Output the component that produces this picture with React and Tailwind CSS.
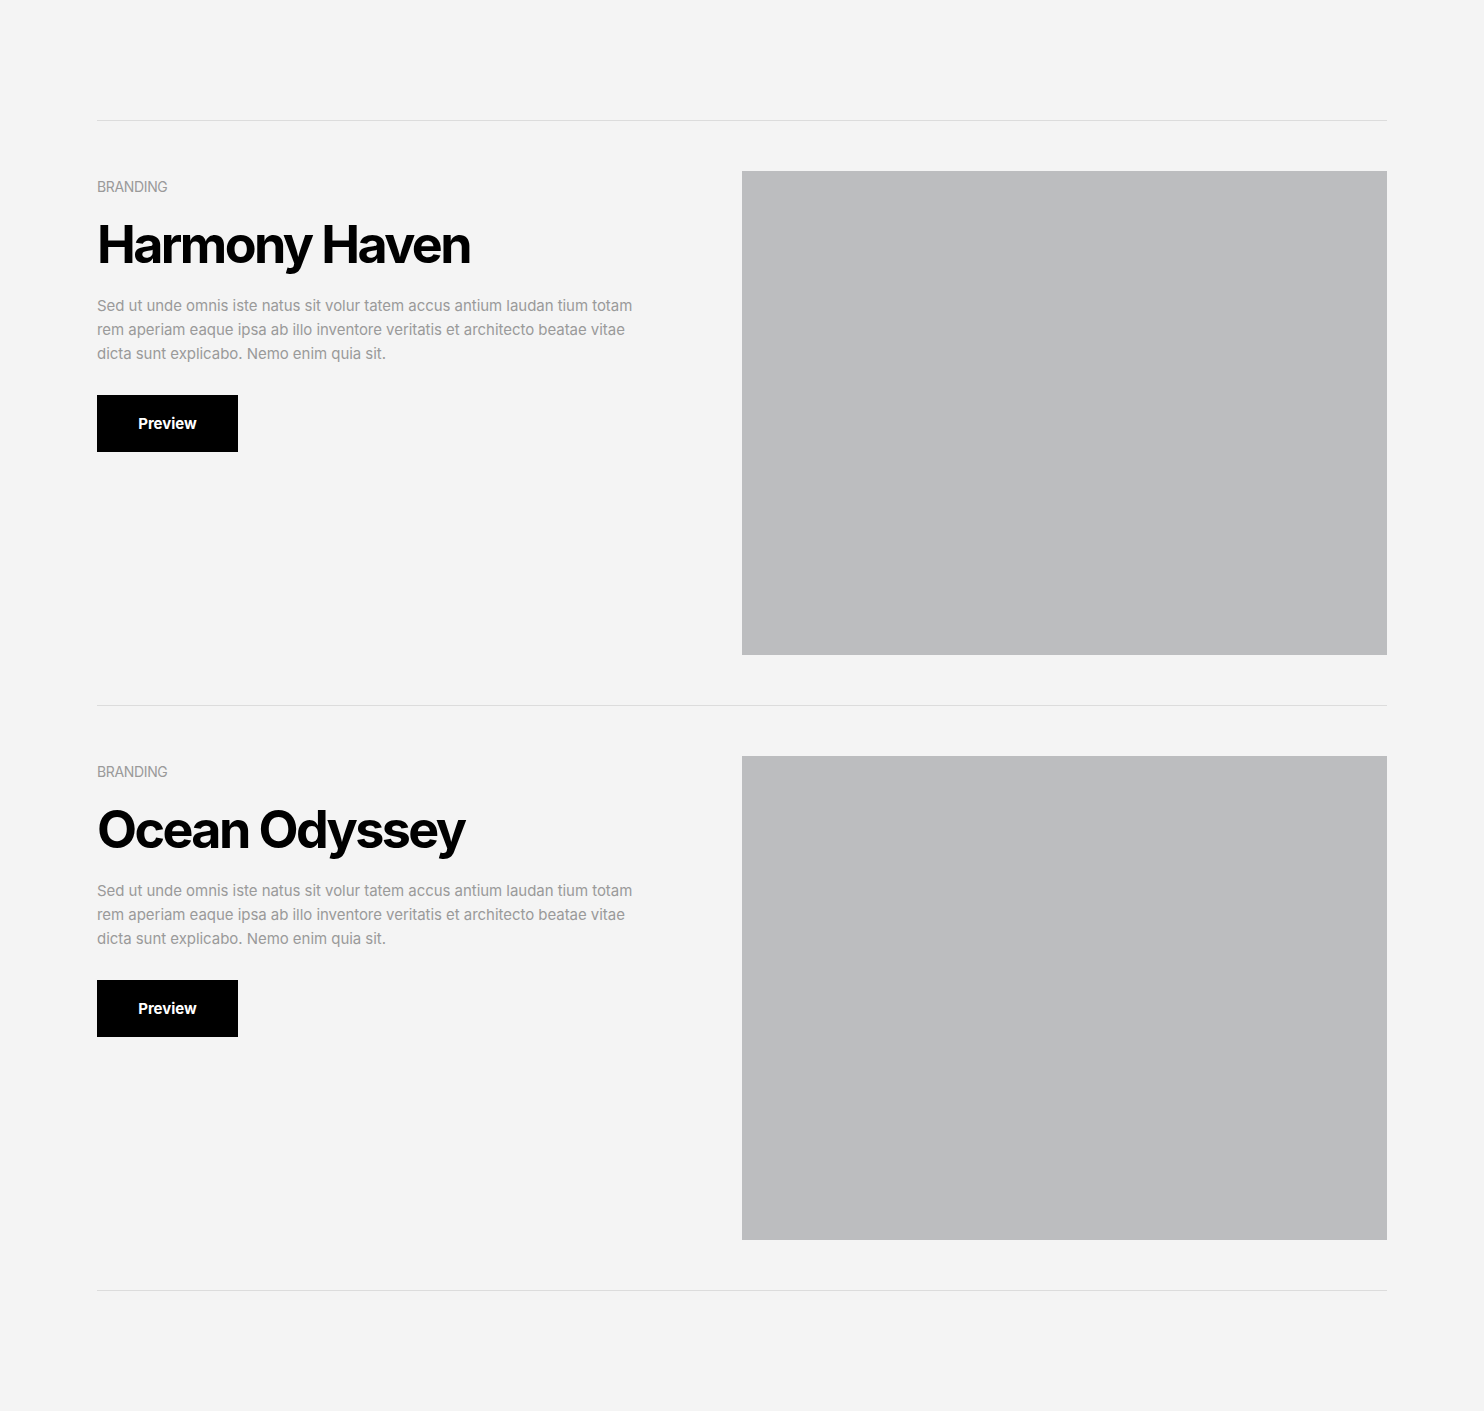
const projects = [
  { tag: "Branding", title: "Harmony Haven" },
  { tag: "Branding", title: "Ocean Odyssey" },
];

const body =
  "Sed ut unde omnis iste natus sit volur tatem accus antium laudan tium totam rem aperiam eaque ipsa ab illo inventore veritatis et architecto beatae vitae dicta sunt explicabo. Nemo enim quia sit.";

// ─── Project row ───────────────────────────────────────────────────────────
const ProjectRow = ({ tag, title }) => (
  <div className="grid grid-cols-2 border-t border-[#dcdcdc] py-[50px]">
    <div className="pt-[6px]">
      <p className="text-[14px] leading-[20px] uppercase tracking-[-0.025em] text-[#9a9a9a]">{tag}</p>
      <h2 className="mt-[18px] text-[52px] leading-[60px] font-bold tracking-[-0.05em] text-black">
        {title}
      </h2>
      <p className="mt-[19px] max-w-[545px] text-[15px] leading-[24px] tracking-[-0.003em] text-[#9a9a9a]">
        {body}
      </p>
      <button className="mt-[29px] w-[141px] h-[57px] pt-[2px] bg-black text-white text-[15px] font-bold">
        Preview
      </button>
    </div>
    <div className="h-[484px] bg-[#bcbdbf]" />
  </div>
);

export default function App() {
  return (
    <div className="min-h-screen bg-[#f4f4f4] font-['Inter',sans-serif] py-[120px]">
      <div className="mx-[97px] border-b border-[#dcdcdc]">
        {projects.map((p) => (
          <ProjectRow key={p.title} {...p} />
        ))}
      </div>
    </div>
  );
}
